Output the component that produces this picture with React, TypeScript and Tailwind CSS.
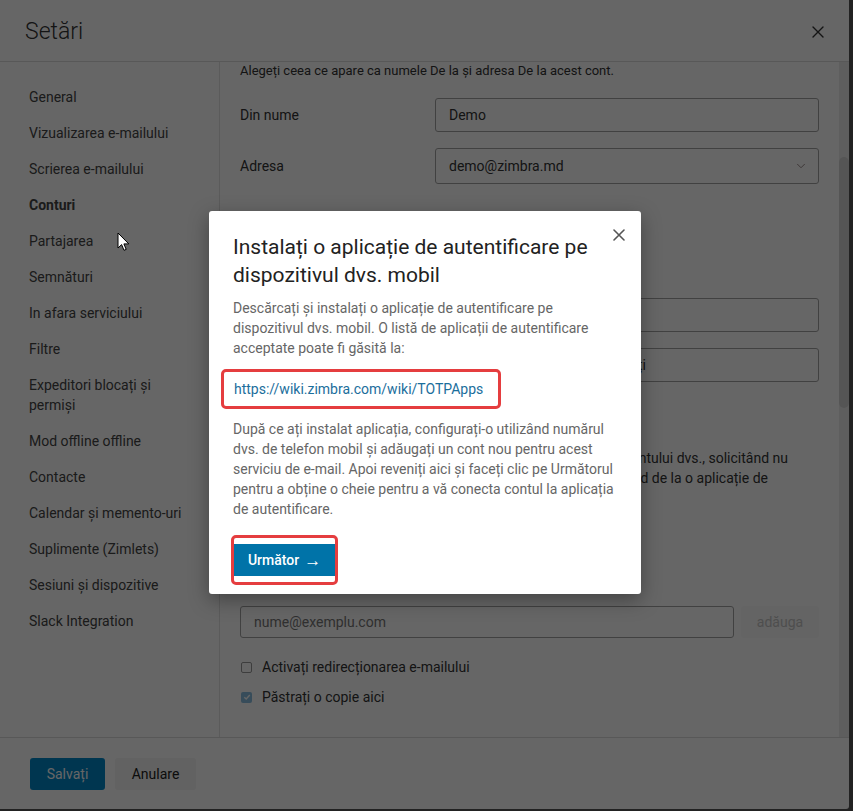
import { ChevronDown } from "lucide-react"

const menu = [
    "General",
    "Vizualizarea e-mailului",
    "Scrierea e-mailului",
    "Conturi",
    "Partajarea",
    "Semnături",
    "In afara serviciului",
    "Filtre",
    "Expeditori blocați și permiși",
    "Mod offline offline",
    "Contacte",
    "Calendar și memento-uri",
    "Suplimente (Zimlets)",
    "Sesiuni și dispozitive",
    "Slack Integration",
]

function CloseIcon({ size, stroke, color }: { size: number; stroke: number; color: string }) {
    return (
        <svg width={size} height={size} viewBox="0 0 12 12" fill="none" stroke={color} strokeWidth={stroke} strokeLinecap="round">
            <path d="M1 1L11 11M11 1L1 11" />
        </svg>
    )
}

function Sidebar() {
    return (
        <nav className="w-[220px] shrink-0 border-r border-[#e3e3e3] pt-[17px]">
            {menu.map((item) => (
                <div
                    key={item}
                    className={`pl-[29px] pr-[30px] py-2 text-[14px] leading-5 text-[#444] ${item === "Conturi" ? "font-bold text-[#333]" : ""}`}
                >
                    {item}
                </div>
            ))}
        </nav>
    )
}

function Field({ label, children, className = "" }: { label: string; children: React.ReactNode; className?: string }) {
    return (
        <div className={`flex items-center ${className}`}>
            <div className="w-[195px] shrink-0 text-[14px] text-[#333]">{label}</div>
            {children}
        </div>
    )
}

function Content() {
    return (
        <div className="flex-1 flex min-w-0">
            <div className="flex-1 pl-5 pr-5 overflow-hidden">
                <p className="text-[13px] leading-[18px] text-[#333]">
                    Alegeți ceea ce apare ca numele De la și adresa De la acest cont.
                </p>

                <Field label="Din nume" className="mt-[18px]">
                    <div className="flex-1 h-[34px] border border-[#a3a3a3] rounded-[3px] flex items-center px-[13px] text-[14px] text-[#333]">
                        Demo
                    </div>
                </Field>

                <Field label="Adresa" className="mt-4">
                    <div className="flex-1 h-[36px] border border-[#a3a3a3] rounded-[3px] flex items-center justify-between pl-[13px] pr-[10px] text-[14px] text-[#333]">
                        demo@zimbra.md
                        <ChevronDown className="w-[14px] h-[14px] text-[#8a7a7a]" strokeWidth={1.5} />
                    </div>
                </Field>

                <h3 className="mt-9 text-[20px] leading-7 text-[#333]">Autentificare în doi pași</h3>
                <p className="mt-[10px] text-[14px] leading-5 text-[#333]">Protejați-vă contul cu un cod suplimentar.</p>

                <Field label="Metodă" className="mt-5">
                    <div className="flex-1 h-[34px] border border-[#a3a3a3] rounded-[3px] flex items-center px-[13px] text-[14px] text-[#333]">
                        Aplicație de autentificare
                    </div>
                </Field>

                <Field label="Aplicații" className="mt-4">
                    <div className="flex-1 h-[34px] border border-[#a3a3a3] rounded-[3px] flex items-center px-[13px] text-[14px] text-[#333] whitespace-nowrap">
                        <span className="w-[197px] text-right">Aplicațiile pe care le preferați</span>
                    </div>
                </Field>

                <div className="mt-[66px] text-[14px] leading-5 text-[#333] whitespace-nowrap">
                    <div className="w-[548px] text-right">Autentificarea în doi pași adaugă securitate contului dvs., solicitând nu</div>
                    <div className="w-[528px] text-right">doar parola când vă conectați, ci și un cod de la o aplicație de</div>
                    <div>autentificare.</div>
                </div>

                <h3 className="mt-10 text-[16px] leading-7 font-medium text-[#333]">Redirecționare e-mail</h3>

                <div className="mt-[30px] flex gap-[7px]">
                    <div className="flex-1 h-[32px] border border-[#a3a3a3] rounded-[3px] flex items-center px-[13px] text-[14px] text-[#777]">
                        nume@exemplu.com
                    </div>
                    <div className="w-[78px] h-[32px] bg-[#fafafa] rounded-[3px] flex items-center justify-center text-[14px] text-[#c4c4c4]">
                        adăuga
                    </div>
                </div>

                <label className="mt-[19px] flex items-center gap-[10px] text-[14px] leading-5 text-[#333]">
                    <span className="ml-[1px] w-[11px] h-[11px] border border-[#9a9a9a] rounded-[2px]" />
                    Activați redirecționarea e-mailului
                </label>
                <label className="mt-[10px] flex items-center gap-[10px] text-[14px] leading-5 text-[#333]">
                    <span className="ml-[1px] w-[11px] h-[11px] rounded-[2px] bg-[#8bbfe0] flex items-center justify-center">
                        <svg width="8" height="8" viewBox="0 0 8 8" fill="none" stroke="white" strokeWidth="1.4">
                            <path d="M1.3 4.2L3.2 6L6.8 2" />
                        </svg>
                    </span>
                    Păstrați o copie aici
                </label>
            </div>

            <div className="w-[10px] shrink-0 bg-[#ececec] pt-[95px]">
                <div className="h-[251px] bg-[#d4d4d4] rounded-full" />
            </div>
        </div>
    )
}

function TotpModal() {
    return (
        <div className="absolute left-[209px] top-[211px] w-[432px] bg-white rounded-[3px] shadow-[0_6px_20px_rgba(0,0,0,0.35)] pt-[22px] pl-6 pr-6 pb-[9px]">
            <button className="absolute right-[16px] top-[18px]">
                <CloseIcon size={12} stroke={1.6} color="#555" />
            </button>
            <h2 className="text-[21px] leading-[28px] text-[#222] pr-4">
                Instalați o aplicație de autentificare pe dispozitivul dvs. mobil
            </h2>
            <p className="mt-[9px] text-[14px] leading-5 text-[#666]">
                Descărcați și instalați o aplicație de autentificare pe dispozitivul dvs. mobil. O listă de aplicații de autentificare acceptate poate fi găsită la:
            </p>
            <div className="mt-[11px] -ml-3 w-[280px] h-[40px] border-[3px] border-[#e53d3f] rounded-[5px] flex items-center pl-[10px]">
                <a className="text-[14px] text-[#1b6e9c]">https://wiki.zimbra.com/wiki/TOTPApps</a>
            </div>
            <p className="mt-[10px] text-[14px] leading-5 text-[#666]">
                După ce ați instalat aplicația, configurați-o utilizând numărul dvs. de telefon mobil și adăugați un cont nou pentru acest serviciu de e-mail. Apoi reveniți aici și faceți clic pe Următorul pentru a obține o cheie pentru a vă conecta contul la aplicația de autentificare.
            </p>
            <div className="mt-4 -ml-[2px] w-[107px] border-[3px] border-[#e53d3f] rounded-[5px] py-[6px]">
                <button className="w-full h-[32px] bg-[#0073a8] text-white text-[14px] font-medium flex items-center justify-center gap-[5px]">
                    Următor <span className="text-[17px] leading-none font-normal">→</span>
                </button>
            </div>
        </div>
    )
}

function Cursor() {
    return (
        <svg className="absolute left-[117px] top-[232px]" width="13" height="20" viewBox="0 0 13 20">
            <path d="M1 1L1 16L4.6 12.6L7 18.3L9.2 17.4L6.9 11.9L11.8 11.9Z" fill="white" stroke="black" strokeWidth="1" strokeLinejoin="round" />
        </svg>
    )
}

export default function App() {
    return (
        <div className="relative w-full h-[811px] overflow-hidden bg-[#555] font-['Roboto',sans-serif]">
            <div className="w-[849px] h-[809px] bg-white rounded-br-[3px] flex flex-col">
                <header className="h-[62px] shrink-0 border-b border-[#dcdcdc] flex items-center justify-between pl-[25px] pr-[25px] pt-[3px]">
                    <h1 className="text-[23px] font-light text-[#333]">Setări</h1>
                    <CloseIcon size={12} stroke={1.4} color="#333" />
                </header>

                <div className="flex-1 flex min-h-0">
                    <Sidebar />
                    <Content />
                </div>

                <footer className="h-[72px] shrink-0 border-t border-[#dcdcdc] flex items-start gap-[10px] pl-[30px] pt-[20px]">
                    <button className="h-[32px] w-[75px] rounded-[3px] bg-[#0087c9] text-white text-[14px]">Salvați</button>
                    <button className="h-[32px] w-[81px] rounded-[3px] bg-[#f5f5f5] text-[#222] text-[14px]">Anulare</button>
                </footer>
            </div>

            <div className="absolute inset-0 bg-black/60" />
            <TotpModal />
            <Cursor />
        </div>
    )
}
